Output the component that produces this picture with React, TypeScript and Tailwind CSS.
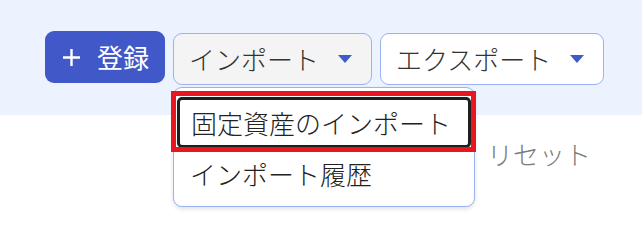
import { ReactNode } from "react";

const FONT = { fontFamily: '"Noto Sans CJK JP", "Noto Sans", sans-serif' };

function Caret() {
  return (
    <svg width="14" height="8" viewBox="0 0 14 8" className="shrink-0">
      <path d="M0 0 H14 L7 8 Z" fill="#3f5bcb" />
    </svg>
  );
}

function DropButton({ label, width, active, children }: { label: string; width: string; active?: boolean; children?: ReactNode }) {
  return (
    <div className="relative">
      <button
        className={`flex items-center justify-between h-[52px] pl-[15px] pr-[19px] rounded-[9px] border border-[#98b2f4] text-[26px] leading-none font-light text-[#333333] ${width} ${
          active ? "bg-[#f4f4f4]" : "bg-white"
        }`}
      >
        <span>{label}</span>
        <Caret />
      </button>
      {children}
    </div>
  );
}

export default function App() {
  return (
    <div className="w-[642px] h-[241px] bg-white overflow-hidden" style={FONT}>
      {/* toolbar */}
      <div className="h-[115px] bg-[#ecf2fe] pl-[45px] pt-[31px]">
        <div className="flex items-start gap-[8px]">
          <button className="flex items-center h-[52px] w-[120px] pl-[18px] gap-[17px] rounded-[9px] bg-[#4159c8] text-white text-[26px] leading-none">
            <svg width="17" height="17" viewBox="0 0 17 17">
              <path d="M8.5 0 V17 M0 8.5 H17" stroke="white" strokeWidth="2.4" />
            </svg>
            <span>登録</span>
          </button>

          <div className="mt-[2px]">
            <DropButton label="インポート" width="w-[199px]" active>
              <div className="absolute left-0 top-[54px] w-[302px] h-[120px] py-[9px] bg-white border border-[#98b2f4] rounded-[9px] shadow-[0_2px_4px_rgba(0,0,0,0.12)] z-10">
                <div className="relative mx-[3px] h-[51px] flex items-center pl-[11px] rounded-[5px] border-[3px] border-[#1e1e1e] text-[26px] leading-none font-light text-[#222222]">
                  固定資産のインポート
                  <div className="absolute -left-[9px] -top-[9px] w-[305px] h-[61px] border-[5px] border-[#e8161f] pointer-events-none" />
                </div>
                <div className="h-[51px] flex items-center pl-[16px] text-[26px] leading-none font-light text-[#222222]">
                  インポート履歴
                </div>
              </div>
            </DropButton>
          </div>

          <div className="mt-[2px]">
            <DropButton label="エクスポート" width="w-[224px]" />
          </div>
        </div>
      </div>

      {/* filter row */}
      <div className="flex pl-[487px] pt-[26px]">
        <span className="text-[26px] leading-none font-light text-[#7b7b7b]">リセット</span>
      </div>
    </div>
  );
}
